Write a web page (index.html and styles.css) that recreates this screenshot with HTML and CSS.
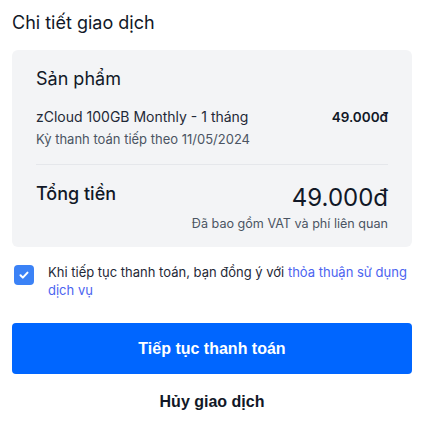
FILE: index.html
```html
<!DOCTYPE html>
<html lang="vi">
<head>
    <meta charset="UTF-8">
    <meta name="viewport" content="width=device-width, initial-scale=1.0">
    <title>Chi tiết giao dịch</title>
    <link rel="stylesheet" href="styles.css">
</head>
<body>
    <main class="checkout">
        <h1>Chi tiết giao dịch</h1>

        <section class="summary">
            <h2>Sản phẩm</h2>
            <div class="item">
                <div class="item-info">
                    <p class="item-name">zCloud 100GB Monthly - 1 tháng</p>
                    <p class="item-note">Kỳ thanh toán tiếp theo 11/05/2024</p>
                </div>
                <span class="item-price">49.000đ</span>
            </div>
            <div class="total">
                <h3>Tổng tiền</h3>
                <div class="total-amount">
                    <span class="total-price">49.000đ</span>
                    <p class="total-note">Đã bao gồm VAT và phí liên quan</p>
                </div>
            </div>
        </section>

        <label class="agree">
            <span class="checkbox">
                <svg viewBox="0 0 24 24" fill="none" stroke="currentColor" stroke-width="3.5" stroke-linecap="round" stroke-linejoin="round">
                    <polyline points="6 12.5 10 16.5 18 8"></polyline>
                </svg>
            </span>
            <span>Khi tiếp tục thanh toán, bạn đồng ý với <a href="#">thỏa thuận sử dụng dịch vụ</a></span>
        </label>

        <button class="btn-pay">Tiếp tục thanh toán</button>
        <button class="btn-cancel">Hủy giao dịch</button>
    </main>
</body>
</html>
```

FILE: styles.css
```css
/* Reset and base styles */
* {
    margin: 0;
    padding: 0;
    box-sizing: border-box;
}
body {
    font-family: Inter, "Noto Sans", sans-serif;
    color: #111827;
    background: #fff;
}

.checkout {
    padding: 12px 11px 0 12px;
}
h1 {
    font-size: 18px;
    font-weight: 400;
    line-height: 22px;
    margin-bottom: 16px;
}

/* Summary card */
.summary {
    background: #f3f4f6;
    border-radius: 6px;
    padding: 17px 24px 14px;
}
.summary h2 {
    font-size: 18px;
    font-weight: 400;
    line-height: 24px;
    margin-bottom: 17px;
}
.item {
    display: flex;
    justify-content: space-between;
    align-items: flex-start;
    padding-bottom: 16px;
    border-bottom: 1px solid #e5e7eb;
}
.item-name {
    font-size: 14px;
    line-height: 18px;
    color: #1f2937;
}
.item-note {
    font-size: 13px;
    line-height: 18px;
    margin-top: 4px;
    color: #4b5563;
}
.item-price {
    font-weight: 600;
    font-size: 13.5px;
    line-height: 18px;
}
.total {
    display: flex;
    justify-content: space-between;
    align-items: flex-start;
    padding-top: 17px;
}
.total h3 {
    font-size: 18px;
    font-weight: 500;
    line-height: 24px;
}
.total-amount {
    text-align: right;
}
.total-price {
    display: block;
    font-size: 24px;
    line-height: 32px;
}
.total-note {
    font-size: 12.6px;
    line-height: 18px;
    color: #4b5563;
    margin-top: 1px;
}

/* Agreement */
.agree {
    display: flex;
    gap: 14px;
    margin: 16px 0 0 2px;
    font-size: 13px;
    line-height: 18px;
    color: #1f2937;
}
.checkbox {
    flex: none;
    width: 20px;
    height: 20px;
    margin-top: 2px;
    border-radius: 4px;
    background: #3b82f6;
    color: #fff;
    display: flex;
    align-items: center;
    justify-content: center;
}
.checkbox svg {
    width: 14px;
    height: 14px;
}
.agree a {
    color: #4c64f0;
    text-decoration: none;
}

/* Buttons */
.btn-pay,
.btn-cancel {
    display: block;
    width: 100%;
    border: none;
    font-family: "Liberation Sans", Arial, sans-serif;
    font-weight: 700;
    font-size: 16px;
    cursor: pointer;
}
.btn-pay {
    margin-top: 24px;
    height: 51px;
    border-radius: 4px;
    background: #0066ff;
    color: #fff;
}
.btn-cancel {
    height: 55px;
    background: none;
    color: #111827;
}
```
